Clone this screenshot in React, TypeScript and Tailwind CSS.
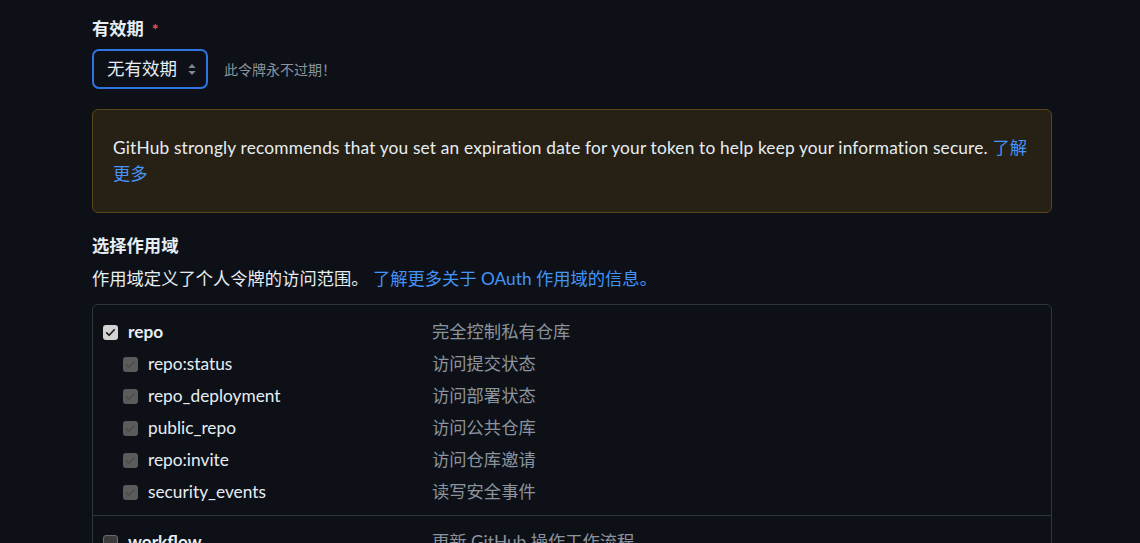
import React from 'react';

type Scope = { name: string; desc: string; sub?: boolean; bold?: boolean; checked?: boolean };

const repoScopes: Scope[] = [
    { name: 'repo', desc: '完全控制私有仓库', bold: true, checked: true },
    { name: 'repo:status', desc: '访问提交状态', sub: true },
    { name: 'repo_deployment', desc: '访问部署状态', sub: true },
    { name: 'public_repo', desc: '访问公共仓库', sub: true },
    { name: 'repo:invite', desc: '访问仓库邀请', sub: true },
    { name: 'security_events', desc: '读写安全事件', sub: true },
];

const CheckMark: React.FC<{ color: string }> = ({ color }) => (
    <svg viewBox="0 0 16 16" className="w-[11px] h-[11px]" fill="none">
        <path d="M2.5 8.5l3.5 3.5 7.5-8" stroke={color} strokeWidth="2.4" strokeLinecap="round" strokeLinejoin="round" />
    </svg>
);

const Box: React.FC<{ kind: 'on' | 'disabled' | 'off' }> = ({ kind }) => {
    if (kind === 'on') {
        return (
            <span className="w-[15px] h-[15px] rounded-[3px] bg-[#d3d3d3] flex items-center justify-center shrink-0">
                <CheckMark color="#1b1b1b" />
            </span>
        );
    }
    if (kind === 'disabled') {
        return (
            <span className="w-[15px] h-[15px] rounded-[3px] bg-[#5b5b5b] flex items-center justify-center shrink-0">
                <CheckMark color="#4d4d4d" />
            </span>
        );
    }
    return <span className="w-[15px] h-[15px] rounded-[3px] bg-[#3b3b3b] border border-[#6a6a6a] shrink-0" />;
};

const ScopeRow: React.FC<{ s: Scope }> = ({ s }) => (
    <div className="flex items-center h-[32px]">
        <div className={`flex items-center gap-[10px] w-[339px] ${s.sub ? 'pl-[30px]' : 'pl-[10px]'}`}>
            <Box kind={s.checked ? 'on' : 'disabled'} />
            <span className={`${s.bold ? 'font-bold' : ''} text-[#e6edf3]`}>{s.name}</span>
        </div>
        <span className="text-[#8b949e]">{s.desc}</span>
    </div>
);

export default function App() {
    return (
        <div
            className="min-h-[543px] bg-[#0d1117] text-[#e6edf3] text-[17.3px] overflow-hidden"
            style={{ fontFamily: 'Lato, "Noto Sans CJK SC", sans-serif' }}
        >
            <div className="w-[960px] ml-[92px] pt-[16px]">
                <div className="flex items-center gap-[8px] h-[26px] font-bold">
                    <span>有效期</span>
                    <span className="text-[#f85149] text-[16px]">*</span>
                </div>

                <div className="flex items-center gap-[16px] mt-[7px]">
                    <div className="w-[116px] h-[40px] rounded-[7px] border-2 border-[#2f74e0] flex items-center justify-between pl-[13px] pr-[9px]">
                        <span className="text-[17.5px]">无有效期</span>
                        <svg viewBox="0 0 10 14" className="w-[10px] h-[13px]">
                            <path d="M5 1l4 4.5H1z" fill="#7d8590" />
                            <path d="M5 13L1 8.5h8z" fill="#7d8590" />
                        </svg>
                    </div>
                    <span className="text-[14px] text-[#8b949e]">此令牌永不过期！</span>
                </div>

                <div className="mt-[20px] rounded-[6px] border border-[#5a4718] bg-[#272115] px-[20px] py-[25px] leading-[26px] tracking-[0.18px]">
                    GitHub strongly recommends that you set an expiration date for your token to help keep your information secure.{' '}
                    <a className="text-[#4493f8] tracking-normal">了解更多</a>
                </div>

                <div className="mt-[20px] font-bold leading-[26px]">选择作用域</div>
                <div className="mt-[7px] leading-[26px]">
                    作用域定义了个人令牌的访问范围。{' '}
                    <a className="text-[#4493f8]">了解更多关于 OAuth 作用域的信息。</a>
                </div>

                <div className="mt-[12px] rounded-[6px] border border-[#30363d]">
                    <div className="pt-[11px] pb-[7px]">
                        {repoScopes.map((s) => (
                            <ScopeRow key={s.name} s={s} />
                        ))}
                    </div>
                    <div className="border-t border-[#30363d] pt-[10px] pb-[8px]">
                        <div className="flex items-center h-[32px]">
                            <div className="flex items-center gap-[10px] w-[339px] pl-[10px]">
                                <Box kind="off" />
                                <span className="font-bold">workflow</span>
                            </div>
                            <span className="text-[#8b949e]">更新 GitHub 操作工作流程</span>
                        </div>
                    </div>
                </div>
            </div>
        </div>
    );
}
